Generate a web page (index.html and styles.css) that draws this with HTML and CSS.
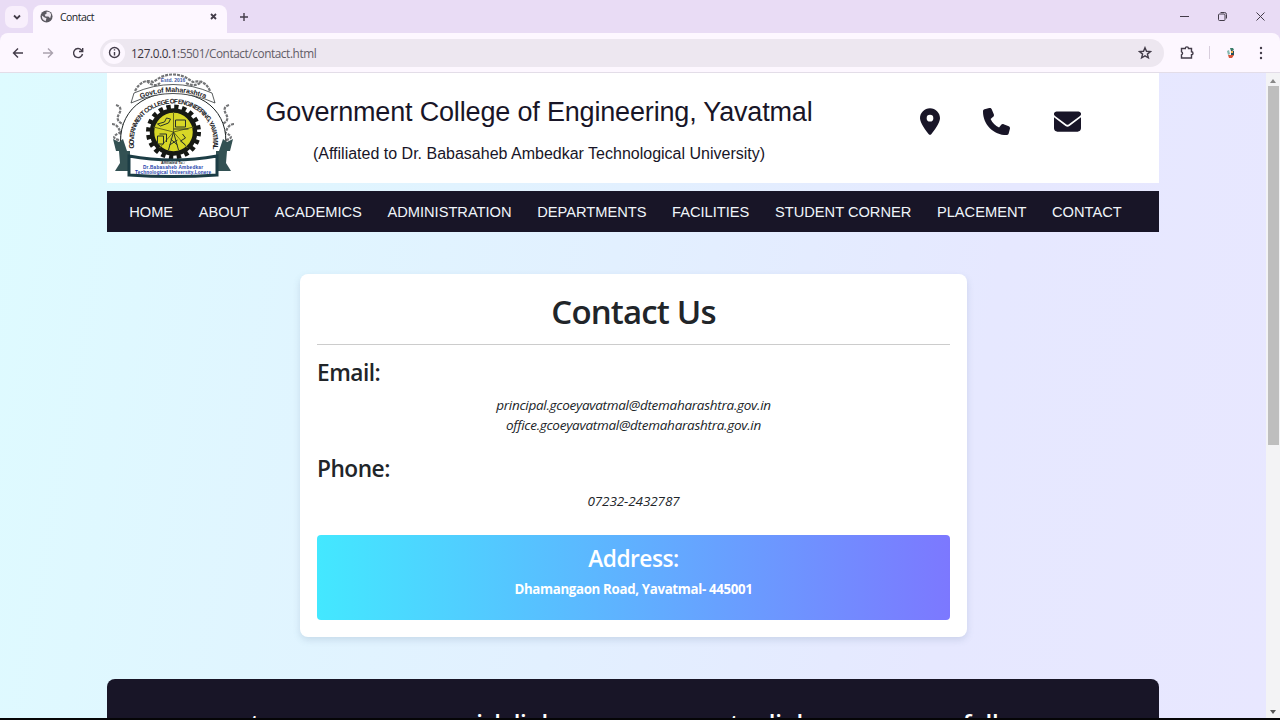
FILE: index.html
```html
<!DOCTYPE html>
<html lang="en">
<head>
<meta charset="utf-8">
<title>Contact</title>
<link rel="stylesheet" href="styles.css">
</head>
<body>
<div class="browser">
  <div class="tabs">
    <div class="tab-search"><svg width="10" height="10" viewBox="0 0 10 10" class="line bold"><path d="M2 3.500l3 3 3-3"/></svg></div>
    <div class="tab">
      <svg width="13" height="13" viewBox="0 0 14 14"><circle cx="7" cy="7" r="6.500" fill="#5b5960"/><path d="M7 2q4-1 5 3l-1 4-2-2-3 0-1-2 2-1zM2 6l3 2 2 1-1 3q-4-1-4-6" fill="#eee8f0"/></svg>
      <span class="tab-title">Contact</span>
      <svg class="line bold" width="9" height="9" viewBox="0 0 9 9"><path d="M2 2l5 5M7 2l-5 5"/></svg>
    </div>
    <svg class="line new-tab" width="10" height="10" viewBox="0 0 10 10"><path d="M5 1v8M1 5h8"/></svg>
    <div class="window-buttons">
      <svg class="line thin" width="11" height="11" viewBox="0 0 11 11"><path d="M1 5.500h9"/></svg>
      <svg class="line thin" width="11" height="11" viewBox="0 0 11 11"><rect x="1.500" y="3" width="6.500" height="6.500" rx="1"/><path d="M3.500 1.500h4q2 0 2 2v4"/></svg>
      <svg class="line thin" width="11" height="11" viewBox="0 0 11 11"><path d="M1.500 1.500l8 8M9.500 1.500l-8 8"/></svg>
    </div>
  </div>
  <div class="toolbar">
    <svg class="line" width="12" height="12" viewBox="0 0 12 12"><path d="M11 6H2M6 1.500L1.500 6 6 10.500"/></svg>
    <svg class="line muted" width="12" height="12" viewBox="0 0 12 12"><path d="M1 6h9M6 1.500L10.500 6 6 10.500"/></svg>
    <svg class="line" width="12" height="12" viewBox="0 0 12 12"><path d="M10.500 7A4.500 4.500 0 1 1 9.400 3L10.500 4M10.700 1v3.500H7"/></svg>
    <div class="address-bar">
      <span class="info"><svg class="line" width="13" height="13" viewBox="0 0 13 13"><circle cx="6.500" cy="6.500" r="5"/><path d="M6.500 6v3.500M6.500 3.300v1.300"/></svg></span>
      <span class="url"><b>127.0.0.1</b>:5501/Contact/contact.html</span>
      <svg class="line star" width="14" height="14" viewBox="0 0 14 14"><path d="M7 1.700l1.500 3.600 3.900.3-3 2.500 1 3.800L7 9.900l-3.400 2 1-3.800-3-2.500 3.900-.3z"/></svg>
    </div>
    <svg class="line ext" width="15" height="15" viewBox="0 0 15 15"><path d="M1.500 3.500h3.800a1.600 1.600 0 0 1 3.200 0h3v3.200a1.500 1.500 0 0 1 0 3V13h-10V9.800a1.600 1.600 0 0 0 0-3z"/></svg>
    <i class="sep"></i>
    <svg class="avatar" width="10" height="12" viewBox="0 0 10 12"><path d="M4 1h3l1 2-3 1z" fill="#397c69"/><path d="M1 4l2-1 1 4-2 1z" fill="#82b7ae"/><path d="M5 3l3 1v4l-3 1z" fill="#234e55"/><path d="M5 4h2v2H5z" fill="#f1ad50"/><path d="M2 8l6 0-2 3H3z" fill="#d65539"/></svg>
    <svg class="kebab" width="4" height="14" viewBox="0 0 4 14"><circle cx="2" cy="2" r="1.200"/><circle cx="2" cy="7" r="1.200"/><circle cx="2" cy="12" r="1.200"/></svg>
  </div>
</div>
<div class="viewport">
  <div class="page">
    <header class="header">
      <svg class="logo" width="131" height="110" viewBox="0 0 131 110">
        <defs><path id="arc" d="M27 86V66A39.500 35.500 0 0 1 106 66V86"/><path id="arc2" d="M28 28Q66 10 104 28"/></defs>
        <g fill="none" stroke="#747577" stroke-width="2.200"><path d="M28 18q7-13 18-9l8-5q12-5 24 0l8 5q12-3 17 9M40 8q7 7 13 2M79 10q10 5 16-2" stroke-dasharray="3 1"/><path d="M9 32q7 2 3 9t4 10-4 9 6 8M122 32q-7 2-3 9t-4 10 4 9-6 8M5 51q8 0 10 17M127 51q-8 0-10 17" stroke-dasharray="3 1"/></g>
        <path d="M17 88C5 52 25 20 66 20s62 32 49 68" fill="#fff" stroke="#1d2424"/>
        <path d="M27 20Q66 3 105 20L108 30Q66 11 24 30z" fill="#fff" stroke="#303536" stroke-width=".8"/>
        <text class="seal seal-year" x="66" y="8.500">Estd. 2016</text>
        <text class="seal seal-state"><textPath href="#arc2" startOffset="50%">Govt.of Maharashtra</textPath></text>
        <text class="seal seal-college"><textPath href="#arc" startOffset="50%">GOVERNMENT COLLEGE OF ENGINEERING, YAVATMAL</textPath></text>
        <circle cx="66.500" cy="59" r="24.500" fill="none" stroke="#151713" stroke-width="6" stroke-dasharray="4.200 3.497"/>
        <circle cx="66.500" cy="59" r="21.500" fill="#d7d727" stroke="#171a14" stroke-width="4.500"/>
        <g transform="translate(0.500 2)" fill="none" stroke="#676a1c"><path d="M66 57V37M66 57L46 52M66 57l20-5M66 57L52 73M66 57l14 16"/><path d="M68 45h10v7H68zM66 54h15M50 49l7-2 2-4 4 1-2 4-8 3zM50 61h6v8h-6zM52 59h7v8M75 59l3 4-5 3 5 4M61 75l5-18 5 18M62 70l8-5M63 64l7 6" stroke="#26312a"/></g>
        <path d="M12 78h11v20H8l5-8zM120 78h-11v20h15l-5-8zM6 66l6 3 4-3 4 12H9zM126 66l-6 3-4-3-4 12h11z" fill="#335153"/>
        <path d="M22 83Q66 91 110 83v19q-44 3-88 0z" fill="#fff" stroke="#1c3d45" stroke-width="3"/>
        <text class="seal seal-affil" x="66" y="91">Affiliated To.:</text>
        <text class="seal seal-univ" x="66" y="95.800" textLength="60">Dr.Babasaheb Ambedkar</text>
        <text class="seal seal-univ" x="66" y="100.800" textLength="76">Technological University,Lonere</text>
      </svg>
      <div class="heading"><div class="college">Government College of Engineering, Yavatmal</div><div class="affiliation">(Affiliated to Dr. Babasaheb Ambedkar Technological University)</div></div>
      <div class="contacts">
        <svg width="20" height="27" viewBox="0 0 384 512"><path d="M215.700 499.200C267 435 384 279.400 384 192 384 86 298 0 192 0S0 86 0 192c0 87.400 117 243 168.300 307.200 12.300 15.300 35.100 15.300 47.400 0zM192 128a64 64 0 1 1 0 128 64 64 0 1 1 0-128z"/></svg>
        <svg width="27" height="27" viewBox="0 0 512 512"><path d="M164.900 24.600c-7.700-18.600-28-28.500-47.400-23.200l-88 24C12.100 30.200 0 46 0 64c0 247.400 200.600 448 448 448 18 0 33.800-12.100 38.600-29.500l24-88c5.300-19.400-4.600-39.700-23.200-47.400l-96-40c-16.300-6.800-35.200-2.100-46.300 11.600L304.700 368C234.300 334.700 177.300 277.700 144 207.300l49.300-40.300c13.700-11.200 18.400-30 11.600-46.300z"/></svg>
        <svg width="27" height="27" viewBox="0 0 512 512"><path d="M48 64a48 48 0 0 0-28.800 86.400l217.600 163.200c11.400 8.500 27 8.500 38.400 0l217.600-163.200A48 48 0 0 0 464 64zM0 176v208c0 35.300 28.700 64 64 64h384c35.300 0 64-28.700 64-64V176L294.400 339.200a64 64 0 0 1-76.800 0z"/></svg>
      </div>
    </header>
    <nav class="nav"><a>HOME</a><a>ABOUT</a><a>ACADEMICS</a><a>ADMINISTRATION</a><a>DEPARTMENTS</a><a>FACILITIES</a><a>STUDENT CORNER</a><a>PLACEMENT</a><a>CONTACT</a></nav>
    <main class="card">
      <h1>Contact Us</h1>
      <section class="email"><h2>Email:</h2><p>principal.gcoeyavatmal@dtemaharashtra.gov.in</p><p>office.gcoeyavatmal@dtemaharashtra.gov.in</p></section>
      <section class="phone"><h2>Phone:</h2><p>07232-2432787</p></section>
      <section class="address"><h2>Address:</h2><p>Dhamangaon Road, Yavatmal- 445001</p></section>
    </main>
    <footer class="footer"><h3 class="first">customer</h3><h3>quick links</h3><h3>extra links</h3><h3 class="last">follow us</h3></footer>
  </div>
  <div class="scrollbar"><i class="up"></i><i class="thumb"></i><i class="down"></i></div>
</div>
<div class="screen-edge"></div>
</body>
</html>
```
FILE: styles.css
```css
* { box-sizing: border-box; }
body { margin: 0; width: 1280px; height: 720px; overflow: hidden; display: flex; flex-direction: column; font-family: "Open Sans", sans-serif; color: #212529; }
svg { display: block; flex: none; }
h1, h2, h3, p { margin: 0; }
.browser { height: 73px; flex: none; background: #e9dcf5; border-bottom: 1px solid #e3dde8; }
.tabs { height: 33px; display: flex; align-items: center; padding-left: 5px; }
.tab-search { width: 23px; height: 22px; border-radius: 7px; background: #f8effc; display: grid; place-items: center; margin-right: 5px; }
.tab { height: 28px; align-self: flex-end; width: 194px; display: flex; align-items: center; padding: 0 9px 5px 7px; background: #fdf7ff; border-radius: 8px 8px 0 0; font-size: 10.500px; }
.tab-title { margin-left: 7px; flex: 1; letter-spacing: -.55px; }
.new-tab { margin-left: 12px; }
.line { fill: none; stroke: #433c49; stroke-width: 1.400; }
.bold { stroke-width: 1.800; }
.thin { stroke-width: 1; }
.muted { stroke: #aaa2ae; }
.window-buttons { margin-left: auto; display: flex; gap: 27px; padding-right: 14px; }
.toolbar { height: 39px; background: #fdf7ff; border-radius: 8px 8px 0 0; display: flex; align-items: center; padding-left: 12px; gap: 18px; }
.address-bar { width: 1064px; height: 28px; margin-left: -2px; border-radius: 14px; background: #ede7f0; display: flex; align-items: center; padding: 0 12px 0 3px; }
.info { width: 22px; height: 22px; border-radius: 50%; background: #fdf7ff; display: grid; place-items: center; }
.url { margin-left: 6px; font-size: 11.800px; color: #625d67; letter-spacing: -.42px; }
.url b { font-weight: 400; color: #39343d; }
.star { margin-left: auto; }
.ext { margin-left: -2px; }
.sep { width: 1px; height: 13px; background: #d8cedd; margin-left: -4px; }
.avatar { margin-left: -2px; }
.kebab { margin-left: 5px; fill: #433c49; }
.viewport { height: 645px; flex: none; display: flex; }
.page { width: 1266px; padding: 0 107px 0 106.500px; overflow: hidden; background: linear-gradient(100deg, #defbff, #e2f0ff 47%, #e6e8ff 75%, #e8e7ff); }
.header { height: 110px; background: #fff; display: flex; align-items: center; }
.logo { align-self: flex-start; }
.seal { text-anchor: middle; font-family: "Liberation Sans", sans-serif; font-weight: 700; fill: #1d2225; }
.seal-year { font-size: 5px; fill: #4058a6; }
.seal-state { font-size: 7px; letter-spacing: -.1px; }
.seal-college { font-size: 6.500px; letter-spacing: -.900px; }
.seal-affil { font-size: 3.800px; }
.seal-univ { font-size: 4.700px; fill: #2442ab; }
.heading { width: 547px; margin-left: 28px; padding-top: 3px; font-family: "Liberation Sans", Arial, sans-serif; text-align: center; color: #181527; white-space: nowrap; }
.college { font-size: 27px; line-height: 35px; letter-spacing: -.170px; }
.affiliation { font-size: 16px; line-height: 20px; margin-top: 14px; }
.contacts { display: flex; align-items: center; margin-left: 107px; margin-top: -13px; gap: 43.500px; fill: #181527; }
.nav { height: 41px; margin-top: 8px; background: #181527; color: #f0f5fa; display: flex; align-items: center; padding-left: 22.700px; gap: 25.600px; font: 14.650px "Liberation Sans", Arial, sans-serif; white-space: nowrap; }
.card { width: 667px; height: 363px; margin: 42px 0 0 193.500px; padding: 17px; border-radius: 8px; background: #fff; box-shadow: 0 3px 7px #61779533; }
h1 { height: 54px; border-bottom: 1px solid #ccc; text-align: center; font-size: 33px; line-height: 41px; font-weight: 600; letter-spacing: -.850px; }
h2 { font-size: 22.700px; line-height: 28px; font-weight: 600; letter-spacing: -.500px; }
.card p { font-size: 13.500px; line-height: 20px; text-align: center; font-style: italic; letter-spacing: -.270px; }
.email { padding-top: 14px; height: 110px; }
.email p:first-of-type { margin-top: 7.500px; }
.phone { height: 80px; }
.card .phone p { margin-top: 8px; letter-spacing: -.1px; }
.address { height: 85px; padding-top: 10px; border-radius: 4px; background: linear-gradient(90deg, #43e8ff, #7c78ff); color: #fff; text-align: center; }
.card .address p { margin-top: 6px; font-style: normal; font-weight: 700; font-size: 13.300px; letter-spacing: -.340px; }
.footer { height: 80px; margin-top: 42px; padding: 28px 0 0 16px; border-radius: 8px 8px 0 0; background: #181527; color: #fff; display: grid; grid-template-columns: repeat(4, 256px); text-align: center; }
h3 { font-size: 24px; line-height: 32px; font-weight: 600; letter-spacing: -.300px; }
.first { padding-left: 32px; }
.last { padding-right: 10px; }
.scrollbar { width: 14px; background: #f3f3f5; display: flex; flex-direction: column; align-items: center; padding: 6px 0 4px; }
.up, .down { border: 3px solid transparent; }
.up { border-top: 0; border-bottom: 4px solid #888; }
.down { margin-top: auto; border-bottom: 0; border-top: 4px solid #555; }
.thumb { width: 11px; height: 359px; margin-top: 3px; background: #bebebe; }
.screen-edge { height: 2px; background: #050507; }
```
